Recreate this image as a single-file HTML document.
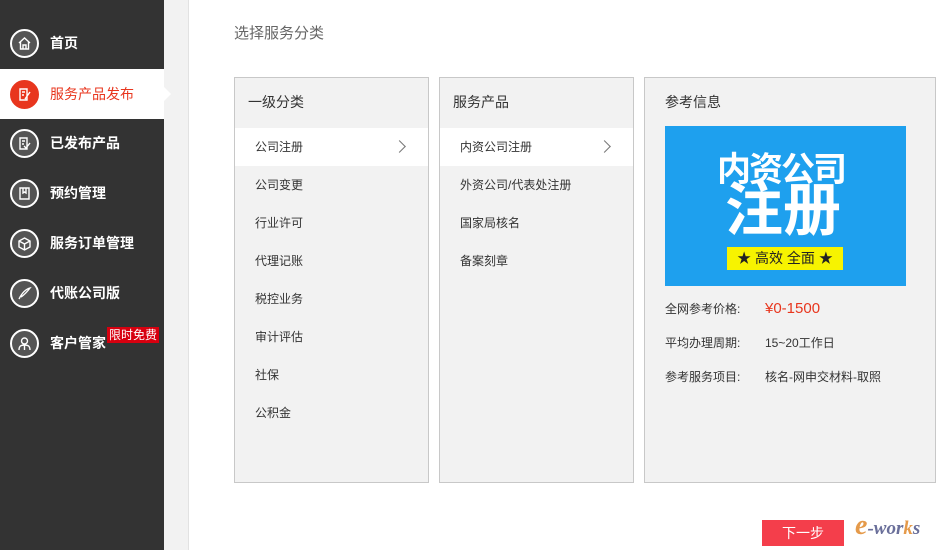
<!DOCTYPE html>
<html><head><meta charset="utf-8"><style>
*{margin:0;padding:0;box-sizing:border-box}
body{width:949px;height:550px;overflow:hidden;background:#f2f2f2;font-family:"Liberation Sans","Noto Sans CJK SC",sans-serif;position:relative}
.side{position:absolute;left:0;top:0;width:164px;height:550px;background:#333}
.item{position:absolute;left:0;width:164px;height:50px;color:#fff;font-size:14px;font-weight:bold}
.item .ic{position:absolute;left:10px;top:11px;width:29px;height:29px;border-radius:50%;border:2px solid #fff;background:#555}
.item .ic svg{position:absolute;left:5px;top:5px;width:15px;height:15px;fill:none;stroke:#fff;stroke-width:1.4}
.item span.t{position:absolute;left:50px;top:15px}
.item.act{background:#fff;color:#e8361e;font-weight:normal}
.item.act .ic{background:#e8361e;border-color:#e8361e}
.item.act:after{content:"";position:absolute;right:-7px;top:18px;border:7px solid transparent;border-left-color:#fff;border-right:0}
.badge{position:absolute;left:107px;top:0;background:#d7000f;color:#fff;font-size:12px;font-weight:normal;padding:0 2px;line-height:16px}
.main{position:absolute;left:188px;top:0;width:761px;height:550px;background:#fff;border-left:1px solid #e2e2e2}
.title{position:absolute;left:234px;top:22px;font-size:15px;color:#666}
.col{position:absolute;top:77px;height:406px;background:#f2f2f2;border:1px solid #c8c8c8}
.col h3{font-weight:normal;font-size:14px;color:#333;padding:14px 0 0 13px;height:50px}
.row{height:38px;line-height:38px;font-size:12px;color:#333;padding-left:20px;position:relative}
.row.sel{background:#fff}
.row.sel:after{content:"";position:absolute;right:24px;top:14px;width:8px;height:8px;border-top:1.5px solid #777;border-right:1.5px solid #777;transform:rotate(45deg)}
.info{font-size:12px;color:#333;position:absolute;left:20px}
.btn{position:absolute;left:762px;top:520px;width:82px;height:26px;background:#f43e4b;color:#fff;font-size:14px;text-align:center;line-height:26px}
</style></head><body>
<div class="side">
<div class="item" style="top:18px"><div class="ic"><svg viewBox="0 0 15 15"><path d="M2 7L7.5 2L13 7M3.5 6V13H11.5V6M6 13V9H9V13"/></svg></div><span class="t">首页</span></div>
<div class="item act" style="top:69px;height:50px"><div class="ic"><svg viewBox="0 0 15 15"><path d="M3 2H10V13H3ZM5 5H8M5 8H7M8 12L13 5"/></svg></div><span class="t">服务产品发布</span></div>
<div class="item" style="top:118px"><div class="ic"><svg viewBox="0 0 15 15"><path d="M3 2H10V13H3ZM5 5H8M5 8H7M7 10L9 12L13 7"/></svg></div><span class="t">已发布产品</span></div>
<div class="item" style="top:168px"><div class="ic"><svg viewBox="0 0 15 15"><path d="M3 2H12V13H3ZM6 2V7L7.5 6L9 7V2"/></svg></div><span class="t">预约管理</span></div>
<div class="item" style="top:218px"><div class="ic"><svg viewBox="0 0 15 15"><path d="M7.5 2L13 5V11L7.5 14L2 11V5ZM2 5L7.5 8L13 5M7.5 8V14"/></svg></div><span class="t">服务订单管理</span></div>
<div class="item" style="top:268px"><div class="ic"><svg viewBox="0 0 15 15"><path d="M2 13C5 7 9 3 13 2C10 6 7 9 4 11"/></svg></div><span class="t">代账公司版</span></div>
<div class="item" style="top:318px"><div class="ic"><svg viewBox="0 0 15 15"><circle cx="7.5" cy="5" r="3"/><path d="M2 14C2 10 4 9 7.5 9S13 10 13 14M7.5 9V14"/></svg></div><span class="t">客户管家</span><span class="badge" style="top:9px">限时免费</span></div>
</div>
<div class="main"></div>
<div class="title">选择服务分类</div>
<div class="col" style="left:234px;width:195px"><h3>一级分类</h3>
<div class="row sel">公司注册</div><div class="row">公司变更</div><div class="row">行业许可</div><div class="row">代理记账</div><div class="row">税控业务</div><div class="row">审计评估</div><div class="row">社保</div><div class="row">公积金</div></div>
<div class="col" style="left:439px;width:195px"><h3>服务产品</h3>
<div class="row sel">内资公司注册</div><div class="row">外资公司/代表处注册</div><div class="row">国家局核名</div><div class="row">备案刻章</div></div>
<div class="col" style="left:644px;width:292px"><h3 style="padding-left:20px">参考信息</h3>
<div style="position:absolute;left:20px;top:48px;width:241px;height:160px;background:#1ea0ee;overflow:hidden">
<div style="position:absolute;left:52px;top:16px;font-size:34px;font-weight:bold;color:#fff;letter-spacing:-2px">内资公司</div>
<div style="position:absolute;left:60px;top:52px;font-size:58px;font-weight:bold;color:#fff;line-height:66px">注册</div>
<div style="position:absolute;left:62px;top:121px;width:116px;height:23px;background:#f7f300;font-size:14px;text-align:center;line-height:23px;color:#222">★ 高效 全面 ★</div></div>
<div class="info" style="top:222px">全网参考价格:</div><div class="info" style="left:120px;top:222px;color:#e8361e;font-size:15px">¥0-1500</div>
<div class="info" style="top:256px">平均办理周期:</div><div class="info" style="left:120px;top:256px">15~20工作日</div>
<div class="info" style="top:290px">参考服务项目:</div><div class="info" style="left:120px;top:290px">核名-网申交材料-取照</div>
</div>
<div class="btn">下一步</div>
<div style="position:absolute;left:855px;top:510px;font:italic bold 28px 'Liberation Serif',serif;color:#e59a4a">e<span style="color:#6a6f9a;font-size:19px">-wor<span style="color:#e59a4a">k</span>s</span></div>
</body></html>
